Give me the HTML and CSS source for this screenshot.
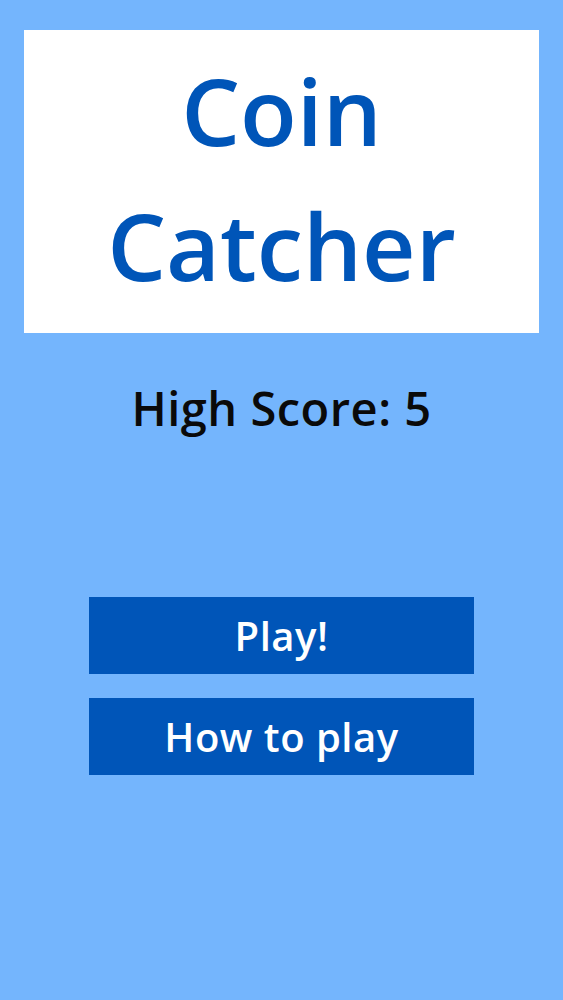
FILE: index.html
```html
<!DOCTYPE html>
<html lang="en">
<head>
<meta charset="utf-8">
<title>Coin Catcher</title>
<link rel="stylesheet" href="styles.css">
</head>
<body>
<main class="screen">
  <header class="title-card">
    <h1 class="title">Coin<br>Catcher</h1>
  </header>
  <p class="high-score">High Score: 5</p>
  <nav class="menu">
    <button class="menu-btn" type="button">Play!</button>
    <button class="menu-btn" type="button">How to play</button>
  </nav>
</main>
</body>
</html>
```

FILE: styles.css
```css
html, body {
  margin: 0;
  padding: 0;
  height: 100%;
}

body {
  background: #74b5fd;
  font-family: "Open Sans", "Noto Sans", sans-serif;
}

.screen {
  display: flex;
  flex-direction: column;
  align-items: center;
  padding: 30px 24px 0;
}

.title-card {
  align-self: stretch;
  background: #ffffff;
  height: 303px;
  box-sizing: border-box;
  padding-top: 13px;
}

.title {
  margin: 0;
  text-align: center;
  color: #0055b8;
  font-size: 93px;
  font-weight: 600;
  line-height: 135px;
}

.high-score {
  margin: 43px 0 0;
  color: #0a0a0a;
  font-size: 47px;
  font-weight: 600;
  line-height: 64px;
  letter-spacing: 0.5px;
}

.menu {
  display: flex;
  flex-direction: column;
  gap: 24px;
  margin-top: 157px;
}

.menu-btn {
  width: 385px;
  height: 77px;
  border: 0;
  border-radius: 0;
  background: #0055b8;
  color: #ffffff;
  font-family: inherit;
  font-size: 40px;
  font-weight: 600;
  letter-spacing: 0.5px;
  padding: 0;
}
```
